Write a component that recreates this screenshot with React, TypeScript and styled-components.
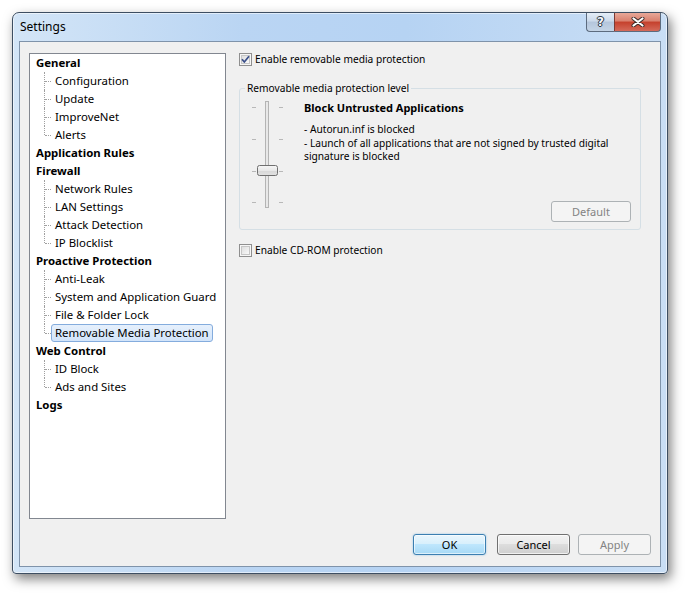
import React from "react";
import styled, { createGlobalStyle, css } from "styled-components";

const Global = createGlobalStyle`
  html, body { margin: 0; padding: 0; background: #ffffff; }
  body {
    font-family: "Noto Sans", "DejaVu Sans", sans-serif;
    font-size: 10.2px;
    color: #000;
  }
  #root { width: 689px; height: 595px; }
`;

const Page = styled.div`
  width: 689px;
  height: 595px;
  box-sizing: border-box;
  padding: 12px 0 0 12px;
`;

const Window = styled.div`
  width: 656px;
  height: 562px;
  box-sizing: border-box;
  border: 1px solid #3d4e62;
  border-radius: 7px 7px 4px 4px;
  background: linear-gradient(to right, #d3e5f7 0%, #bad5f3 35%, #b6d3f3 60%, #c9def5 100%);
  box-shadow: 3px 5px 12px rgba(0, 0, 0, 0.5), inset 0 0 0 1px rgba(255, 255, 255, 0.55);
  display: flex;
  flex-direction: column;
  padding: 0 6px 6px 6px;
`;

const TitleBar = styled.div`
  height: 28px;
  display: flex;
  justify-content: space-between;
  align-items: flex-start;
  padding-left: 1px;
`;

const TitleText = styled.div`
  font-size: 12px;
  line-height: 28px;
  color: #000;
`;

const CaptionGroup = styled.div`
  display: flex;
`;

const CaptionButton = styled.div<{ $kind: "help" | "close" }>`
  height: 19px;
  box-sizing: border-box;
  border: 1px solid #5c6b7e;
  border-top: none;
  display: flex;
  align-items: center;
  justify-content: center;
  ${(p) =>
    p.$kind === "help"
      ? css`
          width: 28px;
          border-right: none;
          border-radius: 0 0 0 4px;
          background: linear-gradient(to bottom, #e4edf7 0%, #cbd9ea 45%, #b4c6dc 50%, #c4d4e6 100%);
        `
      : css`
          width: 47px;
          border-radius: 0 0 4px 0;
          background: linear-gradient(to bottom, #e8a898 0%, #d9806e 45%, #c5402c 50%, #d46a5a 100%);
          border-left: 1px solid #7a3a34;
        `}
`;

const HelpGlyph = styled.span`
  font-family: "DejaVu Sans", sans-serif;
  font-weight: bold;
  font-size: 12px;
  line-height: 12px;
  color: #f4f8fc;
  text-shadow: 0 0 1px #2a3442, 1px 0 0 #2a3442, -1px 0 0 #2a3442, 0 1px 0 #2a3442, 0 -1px 0 #2a3442;
`;

const Client = styled.div`
  flex: 1;
  box-sizing: border-box;
  border: 1px solid #7f93aa;
  background: #f0f0f0;
  padding: 11px 9px 11px 9px;
  display: flex;
  flex-direction: column;
`;

const Main = styled.div`
  display: flex;
  gap: 13px;
  height: 466px;
`;

const Tree = styled.div`
  width: 197px;
  height: 466px;
  box-sizing: border-box;
  border: 1px solid #828790;
  background: #ffffff;
  padding-left: 6px;
  font-size: 11.4px;
`;

const ParentRow = styled.div`
  height: 18px;
  line-height: 18px;
  font-weight: bold;
  white-space: nowrap;
`;

const ChildRow = styled.div<{ $last: boolean }>`
  position: relative;
  height: 18px;
  padding-left: 15px;
  white-space: nowrap;
  &::before {
    content: "";
    position: absolute;
    left: 8px;
    top: 0;
    height: ${(p) => (p.$last ? "9px" : "18px")};
    border-left: 1px dotted #a0a0a0;
  }
  &::after {
    content: "";
    position: absolute;
    left: 9px;
    top: 9px;
    width: 6px;
    border-top: 1px dotted #a0a0a0;
  }
`;

const ChildLabel = styled.span<{ $selected: boolean }>`
  display: inline-block;
  height: 18px;
  box-sizing: border-box;
  line-height: 16px;
  padding: 0 3px;
  border: 1px solid transparent;
  border-radius: 3px;
  ${(p) =>
    p.$selected &&
    css`
      border-color: #84acdd;
      background: linear-gradient(to bottom, #e6f0fc 0%, #d2e4fa 100%);
    `}
`;

const Pane = styled.div`
  width: 402px;
  display: flex;
  flex-direction: column;
`;

const CheckRow = styled.label<{ $top?: number }>`
  display: flex;
  align-items: center;
  height: 13px;
  gap: 3px;
  margin-top: ${(p) => p.$top ?? 0}px;
  line-height: 13px;
  white-space: nowrap;
`;

const Group = styled.fieldset`
  margin: 15px 0 0 0;
  padding: 0 9px 7px 10px;
  min-width: 0;
  height: 149px;
  box-sizing: border-box;
  border: 1px solid #d5dfe5;
  border-radius: 3px;
`;

const Legend = styled.legend`
  margin-left: -5px;
  padding: 0 2px;
  line-height: 14px;
  color: #000;
`;

const GroupBody = styled.div`
  display: flex;
  height: 127px;
  padding-top: 6px;
  box-sizing: border-box;
  gap: 20px;
`;

const TextCol = styled.div`
  flex: 1;
  display: flex;
  flex-direction: column;
`;

const LevelTitle = styled.div`
  font-weight: bold;
  font-size: 11px;
  line-height: 14px;
`;

const Desc = styled.div`
  margin-top: 8px;
  line-height: 13.5px;
  white-space: nowrap;
`;

const Footer = styled.div`
  margin-top: 15px;
  display: flex;
  justify-content: flex-end;
`;

const Button = styled.div<{ $variant: "default" | "normal" | "disabled"; $ml?: number }>`
  width: 73px;
  height: 21px;
  box-sizing: border-box;
  border-radius: 3px;
  display: flex;
  align-items: center;
  justify-content: center;
  font-size: 11px;
  margin-left: ${(p) => p.$ml ?? 0}px;
  ${(p) =>
    p.$variant === "default"
      ? css`
          border: 1px solid #3c7fb1;
          background: linear-gradient(to bottom, #eaf6fd 0%, #d9f0fc 45%, #bee6fd 50%, #a7d9f5 100%);
          box-shadow: inset 0 0 0 1px rgba(255, 255, 255, 0.6), 0 0 2px rgba(70, 160, 220, 0.6);
          color: #000;
        `
      : p.$variant === "normal"
      ? css`
          border: 1px solid #707070;
          background: linear-gradient(to bottom, #f2f2f2 0%, #ebebeb 45%, #dddddd 50%, #cfcfcf 100%);
          box-shadow: inset 0 0 0 1px rgba(255, 255, 255, 0.7);
          color: #000;
        `
      : css`
          border: 1px solid #adb2b5;
          background: #f4f4f4;
          color: #838383;
        `}
`;

const DefaultButton = styled(Button)`
  width: 80px;
  margin-top: auto;
  align-self: flex-end;
`;

const CheckBox = ({ checked }: { checked: boolean }) => (
  <svg width="13" height="13" viewBox="0 0 13 13">
    <defs>
      <linearGradient id={checked ? "cbg1" : "cbg2"} x1="0" y1="0" x2="1" y2="1">
        <stop offset="0" stopColor="#dcdcdc" />
        <stop offset="1" stopColor="#fbfbfb" />
      </linearGradient>
    </defs>
    <rect x="0.5" y="0.5" width="12" height="12" fill="#f6f6f6" stroke="#8f8f8f" />
    <rect x="2.5" y="2.5" width="8" height="8" fill={`url(#${checked ? "cbg1" : "cbg2"})`} stroke="#c6c6c6" />
    {checked && (
      <path d="M3 6.2 L5.3 9 L10 3.2" fill="none" stroke="#3a4f8a" strokeWidth="1.7" strokeLinejoin="round" />
    )}
  </svg>
);

const Slider = () => (
  <svg width="34" height="107" viewBox="0 0 34 107">
    <defs>
      <linearGradient id="thumbg" x1="0" y1="0" x2="0" y2="1">
        <stop offset="0" stopColor="#f6f6f6" />
        <stop offset="0.5" stopColor="#e8e8e8" />
        <stop offset="0.55" stopColor="#d8d8d8" />
        <stop offset="1" stopColor="#e2e2e2" />
      </linearGradient>
    </defs>
    <rect x="15.5" y="0.5" width="3" height="106" fill="#e8e8e8" stroke="#b4b4b4" />
    {[6, 38, 70, 101].map((y) => (
      <g key={y} stroke="#b8b8b8">
        <line x1="2" y1={y + 0.5} x2="6" y2={y + 0.5} />
        <line x1="29" y1={y + 0.5} x2="33" y2={y + 0.5} />
      </g>
    ))}
    <rect x="7.5" y="64.5" width="20" height="10" rx="2" fill="url(#thumbg)" stroke="#6f6f6f" />
  </svg>
);

const CloseGlyph = () => (
  <svg width="14" height="10" viewBox="0 0 14 10">
    <path d="M2.5 1.5 L11.5 8.5 M11.5 1.5 L2.5 8.5" stroke="#3b2a28" strokeWidth="4" strokeLinecap="round" />
    <path d="M2.5 1.5 L11.5 8.5 M11.5 1.5 L2.5 8.5" stroke="#ffffff" strokeWidth="2.2" strokeLinecap="round" />
  </svg>
);

type Node = { label: string; children?: string[] };

const tree: Node[] = [
  { label: "General", children: ["Configuration", "Update", "ImproveNet", "Alerts"] },
  { label: "Application Rules" },
  { label: "Firewall", children: ["Network Rules", "LAN Settings", "Attack Detection", "IP Blocklist"] },
  {
    label: "Proactive Protection",
    children: ["Anti-Leak", "System and Application Guard", "File & Folder Lock", "Removable Media Protection"],
  },
  { label: "Web Control", children: ["ID Block", "Ads and Sites"] },
  { label: "Logs" },
];

const selected = "Removable Media Protection";

export default function App() {
  return (
    <>
      <Global />
      <Page>
        <Window>
          <TitleBar>
            <TitleText>Settings</TitleText>
            <CaptionGroup>
              <CaptionButton $kind="help">
                <HelpGlyph>?</HelpGlyph>
              </CaptionButton>
              <CaptionButton $kind="close">
                <CloseGlyph />
              </CaptionButton>
            </CaptionGroup>
          </TitleBar>
          <Client>
            <Main>
              <Tree>
                {tree.map((n) => (
                  <React.Fragment key={n.label}>
                    <ParentRow>{n.label}</ParentRow>
                    {n.children?.map((c, i) => (
                      <ChildRow key={c} $last={i === n.children!.length - 1}>
                        <ChildLabel $selected={c === selected}>{c}</ChildLabel>
                      </ChildRow>
                    ))}
                  </React.Fragment>
                ))}
              </Tree>
              <Pane>
                <CheckRow>
                  <CheckBox checked />
                  <span>Enable removable media protection</span>
                </CheckRow>
                <Group>
                  <Legend>Removable media protection level</Legend>
                  <GroupBody>
                    <Slider />
                    <TextCol>
                      <LevelTitle>Block Untrusted Applications</LevelTitle>
                      <Desc>
                        - Autorun.inf is blocked
                        <br />- Launch of all applications that are not signed by trusted digital
                        <br />
                        signature is blocked
                      </Desc>
                      <DefaultButton $variant="disabled">Default</DefaultButton>
                    </TextCol>
                  </GroupBody>
                </Group>
                <CheckRow $top={14}>
                  <CheckBox checked={false} />
                  <span>Enable CD-ROM protection</span>
                </CheckRow>
              </Pane>
            </Main>
            <Footer>
              <Button $variant="default">OK</Button>
              <Button $variant="normal" $ml={11}>
                Cancel
              </Button>
              <Button $variant="disabled" $ml={8}>
                Apply
              </Button>
            </Footer>
          </Client>
        </Window>
      </Page>
    </>
  );
}
